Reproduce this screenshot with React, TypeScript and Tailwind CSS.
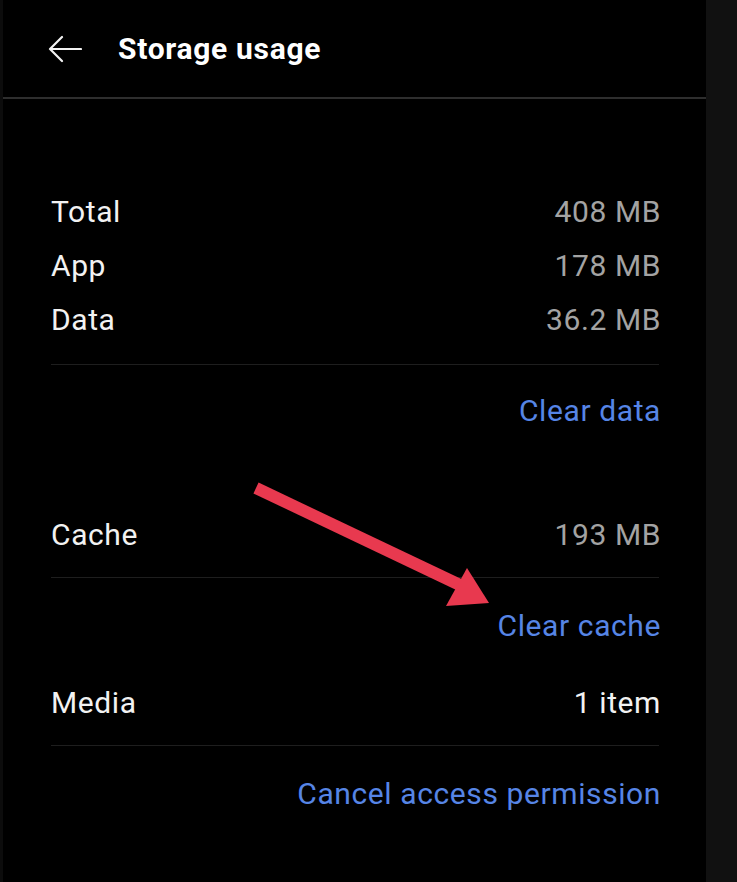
import React from 'react'

const font = { fontFamily: 'Roboto, "Noto Sans", sans-serif' }

function Row({ label, value, bright }: { label: string; value: string; bright?: boolean }) {
  return (
    <div className="flex h-[54px] items-center justify-between text-[30px] tracking-[0.6px]">
      <span className="text-[#f2f2f2]">{label}</span>
      <span className={bright ? 'text-[#f2f2f2]' : 'text-[#a3a3a3]'}>{value}</span>
    </div>
  )
}

function Action({ label, className }: { label: string; className: string }) {
  return (
    <div className={`flex items-center justify-end text-[30px] tracking-[0.6px] text-[#5685e6] ${className}`}>
      {label}
    </div>
  )
}

export default function App() {
  return (
    <div className="flex h-[882px] w-[737px] overflow-hidden bg-[#111111]" style={font}>
      <div className="relative h-full w-[706px] border-l-[3px] border-[#0c0c0c] bg-black">
        <div className="flex h-[97px] items-center pl-[45px]">
          <svg width="34" height="28" viewBox="0 0 34 28" fill="none" stroke="#f2f2f2" strokeWidth="2.2" strokeLinecap="round" strokeLinejoin="round">
            <path d="M33 14H2M14 2L2 14l12 12" />
          </svg>
          <span className="ml-[36px] text-[30px] font-bold tracking-[0.7px] text-white">Storage usage</span>
        </div>
        <div className="h-[2px] bg-[#2e2e2e]" />

        <div className="pl-[48px] pr-[45px] pt-[85px]">
          <Row label="Total" value="408 MB" />
          <Row label="App" value="178 MB" />
          <Row label="Data" value="36.2 MB" />
          <div className="mt-[18px] h-px bg-[#1e1e1e] mr-[2px]" />
          <Action label="Clear data" className="h-[91px]" />
          <div className="mt-[51px]">
            <Row label="Cache" value="193 MB" />
          </div>
          <div className="mt-[16px] h-px bg-[#1e1e1e] mr-[2px]" />
          <Action label="Clear cache" className="h-[95px]" />
          <div className="flex h-[58px] items-center justify-between text-[30px] tracking-[0.6px]">
            <span className="text-[#f2f2f2]">Media</span>
            <span className="text-[#f2f2f2]">1 item</span>
          </div>
          <div className="mt-[14px] h-px bg-[#1e1e1e] mr-[2px]" />
          <Action label="Cancel access permission" className="h-[94px]" />
        </div>

        <svg className="pointer-events-none absolute left-[-3px] top-0" width="706" height="882" viewBox="0 0 706 882">
          <path d="M256 488L462 586" stroke="#e8394f" strokeWidth="12" strokeLinecap="butt" />
          <path d="M467 568L489 603L446 606Z" fill="#e8394f" />
        </svg>
      </div>
      <div className="flex-1" />
    </div>
  )
}
